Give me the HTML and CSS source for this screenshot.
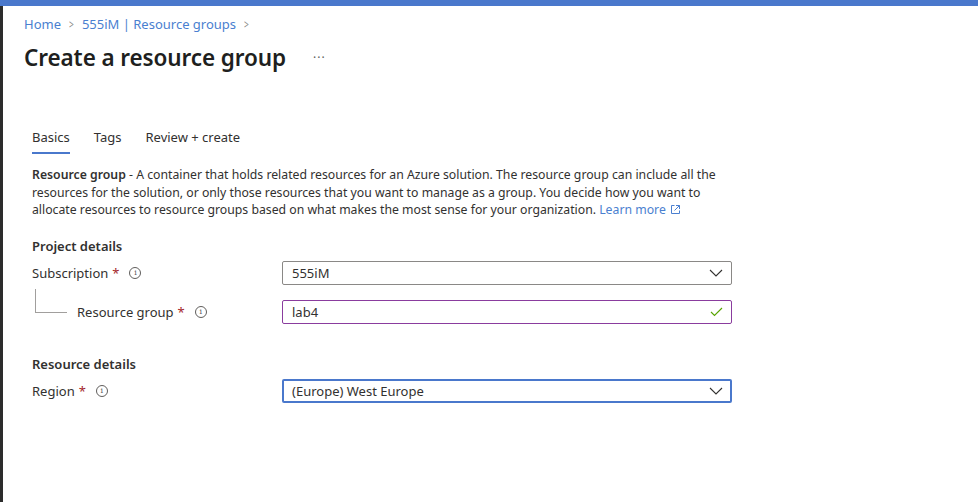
FILE: index.html
```html
<!DOCTYPE html>
<html>
<head>
<meta charset="utf-8">
<link rel="stylesheet" href="styles.css">
</head>
<body>
<div class="topbar"></div>
<div class="shell">
  <div class="sidestrip"></div>
  <main class="main">
    <nav class="crumbs">
      <a>Home</a><span class="sep">&gt;</span><a>555iM | Resource groups</a><span class="sep">&gt;</span>
    </nav>
    <div class="titlerow">
      <h1>Create a resource group</h1>
      <span class="more">···</span>
    </div>
    <div class="content">
      <div class="tabs">
        <span class="tab active">Basics</span>
        <span class="tab">Tags</span>
        <span class="tab">Review + create</span>
      </div>
      <p class="desc"><b>Resource group</b> - A container that holds related resources for an Azure solution. The resource group can include all the resources for the solution, or only those resources that you want to manage as a group. You decide how you want to allocate resources to resource groups based on what makes the most sense for your organization. <a class="link">Learn more</a><svg class="ext" width="11" height="11" viewBox="0 0 11 11"><path d="M4.5 1.5H1.5V9.5H9.5V6.5" fill="none" stroke="#4a7fd0" stroke-width="1"/><path d="M6 1.5H9.5V5M9.5 1.5L4.5 6.5" fill="none" stroke="#4a7fd0" stroke-width="1"/></svg></p>

      <h2 class="section">Project details</h2>
      <div class="row">
        <div class="label">Subscription <span class="req">*</span> <span class="info">i</span></div>
        <div class="field select"><span>555iM</span><svg class="chev" width="14" height="8" viewBox="0 0 14 8"><path d="M1 1L7 7L13 1" fill="none" stroke="#323130" stroke-width="1.1"/></svg></div>
      </div>
      <div class="row nested">
        <div class="label"><span class="tree"></span>Resource group <span class="req">*</span> <span class="info">i</span></div>
        <div class="field text"><span>lab4</span><svg class="check" width="13" height="10" viewBox="0 0 13 10"><path d="M1 5L4.5 8.5L12 1" fill="none" stroke="#57a300" stroke-width="1.1"/></svg></div>
      </div>

      <h2 class="section sec2">Resource details</h2>
      <div class="row">
        <div class="label">Region <span class="req">*</span> <span class="info">i</span></div>
        <div class="field select focus"><span>(Europe) West Europe</span><svg class="chev" width="14" height="8" viewBox="0 0 14 8"><path d="M1 1L7 7L13 1" fill="none" stroke="#323130" stroke-width="1.1"/></svg></div>
      </div>
    </div>
  </main>
</div>
</body>
</html>
```
FILE: styles.css
```css
* { box-sizing: border-box; }
html, body { margin: 0; padding: 0; background: #fff; }
body {
  font-family: "Noto Sans", "Open Sans", "Liberation Sans", sans-serif;
  color: #323130;
  width: 978px;
  height: 502px;
  overflow: hidden;
}
.topbar { height: 6px; background: #4a78cc; }
.shell { display: flex; height: 496px; }
.sidestrip { width: 3px; background: #2c2c2c; flex: none; }
.main { flex: 1; padding-left: 21px; }
.crumbs {
  display: flex; align-items: center;
  font-size: 13px; height: 22px; margin-top: 7px;
  color: #0078d4;
}
.crumbs a { color: #4a7fd0; }
.crumbs .sep { color: #8a8886; margin: 0 7px; font-size: 12px; transform: scaleX(0.7); }
.titlerow { display: flex; align-items: center; margin-top: 4px; height: 36px; }
h1 { font-size: 22.5px; font-weight: 600; margin: 0; color: #201f1e; letter-spacing: -0.1px; }
.more { margin-left: 27px; font-size: 12px; color: #605e5c; letter-spacing: 1px; }
.content { padding-left: 8px; margin-top: 50px; }
.tabs { display: flex; gap: 0; font-size: 13px; height: 28px; }
.tab { margin-right: 24px; height: 28px; line-height: 24px; color: #323130; }
.tab.active { border-bottom: 2px solid #4a78cc; height: 29px; }
.desc { font-size: 12.25px; line-height: 17.5px; margin: 13px 0 0 0; width: 700px; color: #323130; }
.desc b { font-weight: 600; }
.link { color: #4a7fd0; }
.ext { vertical-align: -1px; margin-left: 4px; }
.section { font-size: 13px; font-weight: 600; margin: 17px 0 0 0; height: 20px; line-height: 20px; color: #323130; }
.sec2 { margin-top: 30px; }
.row { display: flex; align-items: center; margin-top: 5px; height: 24px; }
.row.nested { margin-top: 15px; }
.label { width: 250px; font-size: 13px; display: flex; align-items: center; position: relative; }
.nested .label { padding-left: 45px; }
.req { color: #a4262c; margin-left: 4px; }
.info {
  display: inline-flex; align-items: center; justify-content: center;
  width: 12px; height: 12px; border: 1px solid #605e5c; border-radius: 50%;
  font-size: 8px; color: #605e5c; margin-left: 10px; font-family: "DejaVu Serif", serif; line-height: 1;
}
.tree {
  position: absolute; left: 3px; top: -14px;
  width: 32px; height: 24px;
  border-left: 1px solid #a19f9d; border-bottom: 1px solid #a19f9d;
}
.field {
  width: 450px; height: 24px; border: 1px solid #8a8886; border-radius: 2px;
  display: flex; align-items: center; justify-content: space-between;
  padding: 0 8px 0 9px; font-size: 13px; color: #323130;
}
.field.text { border-color: #8a3c9e; }
.field.focus { border: 2px solid #4a78cc; padding-left: 8px; padding-right: 7px; }
.chev { margin-top: 1px; }
```
